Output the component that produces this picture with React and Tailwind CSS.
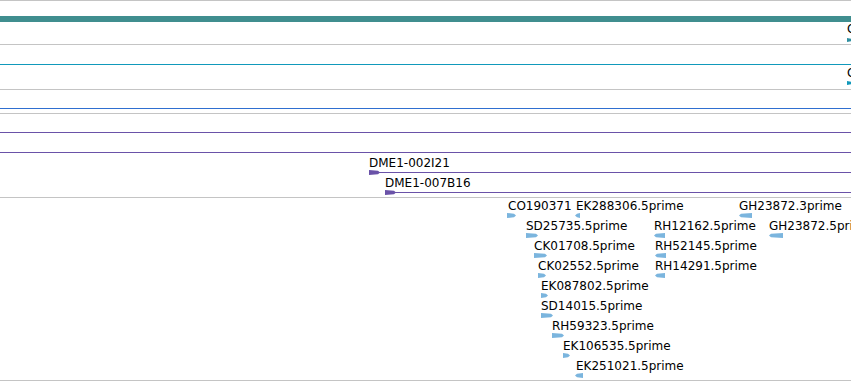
import React from "react";

const font = { fontFamily: '"DejaVu Sans", "Liberation Sans", sans-serif' };

function Arrow({ x, y, w, h = 5, dir = "r", color }) {
  const pts =
    dir === "r"
      ? `0,0 ${w - 2},0.8 ${w},${h / 2} ${w - 2},${h - 0.8} 0,${h}`
      : `${w},0 2,0.8 0,${h / 2} 2,${h - 0.8} ${w},${h}`;
  return (
    <svg
      className="absolute"
      style={{ left: x, top: y }}
      width={w}
      height={h}
      viewBox={`0 0 ${w} ${h}`}
    >
      <polygon points={pts} fill={color} />
    </svg>
  );
}

function Label({ x, y, children }) {
  return (
    <div
      className="absolute whitespace-nowrap text-[12px] leading-[14px] text-black"
      style={{ left: x, top: y }}
    >
      {children}
    </div>
  );
}

const ests = [
  { label: "CO190371", x: 508, row: 0, ax: 507, aw: 9, dir: "r" },
  { label: "EK288306.5prime", x: 576, row: 0, ax: 575, aw: 5, dir: "l" },
  { label: "GH23872.3prime", x: 739, row: 0, ax: 739, aw: 13, dir: "l" },
  { label: "SD25735.5prime", x: 526, row: 1, ax: 526, aw: 12, dir: "r" },
  { label: "RH12162.5prime", x: 654, row: 1, ax: 654, aw: 11, dir: "l" },
  { label: "GH23872.5prime", x: 769, row: 1, ax: 769, aw: 14, dir: "l" },
  { label: "CK01708.5prime", x: 534, row: 2, ax: 534, aw: 13, dir: "r" },
  { label: "RH52145.5prime", x: 655, row: 2, ax: 655, aw: 11, dir: "l" },
  { label: "CK02552.5prime", x: 538, row: 3, ax: 538, aw: 8, dir: "r" },
  { label: "RH14291.5prime", x: 655, row: 3, ax: 655, aw: 10, dir: "l" },
  { label: "EK087802.5prime", x: 541, row: 4, ax: 541, aw: 7, dir: "r" },
  { label: "SD14015.5prime", x: 541, row: 5, ax: 541, aw: 12, dir: "r" },
  { label: "RH59323.5prime", x: 552, row: 6, ax: 552, aw: 12, dir: "r" },
  { label: "EK106535.5prime", x: 563, row: 7, ax: 563, aw: 7, dir: "r" },
  { label: "EK251021.5prime", x: 576, row: 8, ax: 575, aw: 8, dir: "l" },
];

export default function App() {
  return (
    <div
      className="w-[851px] h-[381px] bg-white overflow-hidden flex flex-col border-t border-[#c4c4c4]"
      style={font}
    >
      {/* Track 1 */}
      <div className="relative h-[44px] border-b border-[#c4c4c4] overflow-hidden pt-[15px]">
        <div className="h-[6px] bg-[#408e8f]" />
        <Label x={847} y={21}>CG</Label>
        <Arrow x={847} y={37} w={6} h={4} dir="r" color="#2f8fa0" />
      </div>
      {/* Track 2 */}
      <div className="relative h-[45px] border-b border-[#c4c4c4] overflow-hidden pt-[19px]">
        <div className="h-px bg-[#1199bb]" />
        <Label x={847} y={21}>CG</Label>
        <Arrow x={847} y={36} w={6} h={4} dir="r" color="#1199bb" />
      </div>
      {/* Track 3 */}
      <div className="h-[24px] border-b border-[#c4c4c4] overflow-hidden pt-[18px]">
        <div className="h-px bg-[#2f6fd0]" />
      </div>
      {/* Track 4 */}
      <div className="relative h-[84px] border-b border-[#c4c4c4] overflow-hidden pt-[18px] flex flex-col gap-[19px]">
        <div className="h-px bg-[#6a52a8]" />
        <div className="h-px bg-[#6a52a8]" />
        <div className="h-px bg-[#6a52a8] ml-[375px]" />
        <div className="h-px bg-[#6a52a8] ml-[391px]" />
        <Label x={369} y={42}>DME1-002I21</Label>
        <Arrow x={369} y={56} w={11} h={5} dir="r" color="#6a52a8" />
        <Label x={385} y={62}>DME1-007B16</Label>
        <Arrow x={385} y={76} w={11} h={5} dir="r" color="#6a52a8" />
      </div>
      {/* Track 5 */}
      <div className="relative h-[183px] border-b border-[#c4c4c4] overflow-hidden">
        {ests.map((e) => (
          <React.Fragment key={e.label}>
            <Label x={e.x} y={1 + e.row * 20}>
              {e.label}
            </Label>
            <Arrow
              x={e.ax}
              y={15 + e.row * 20}
              w={e.aw}
              h={5}
              dir={e.dir}
              color="#7bb5de"
            />
          </React.Fragment>
        ))}
      </div>
    </div>
  );
}
